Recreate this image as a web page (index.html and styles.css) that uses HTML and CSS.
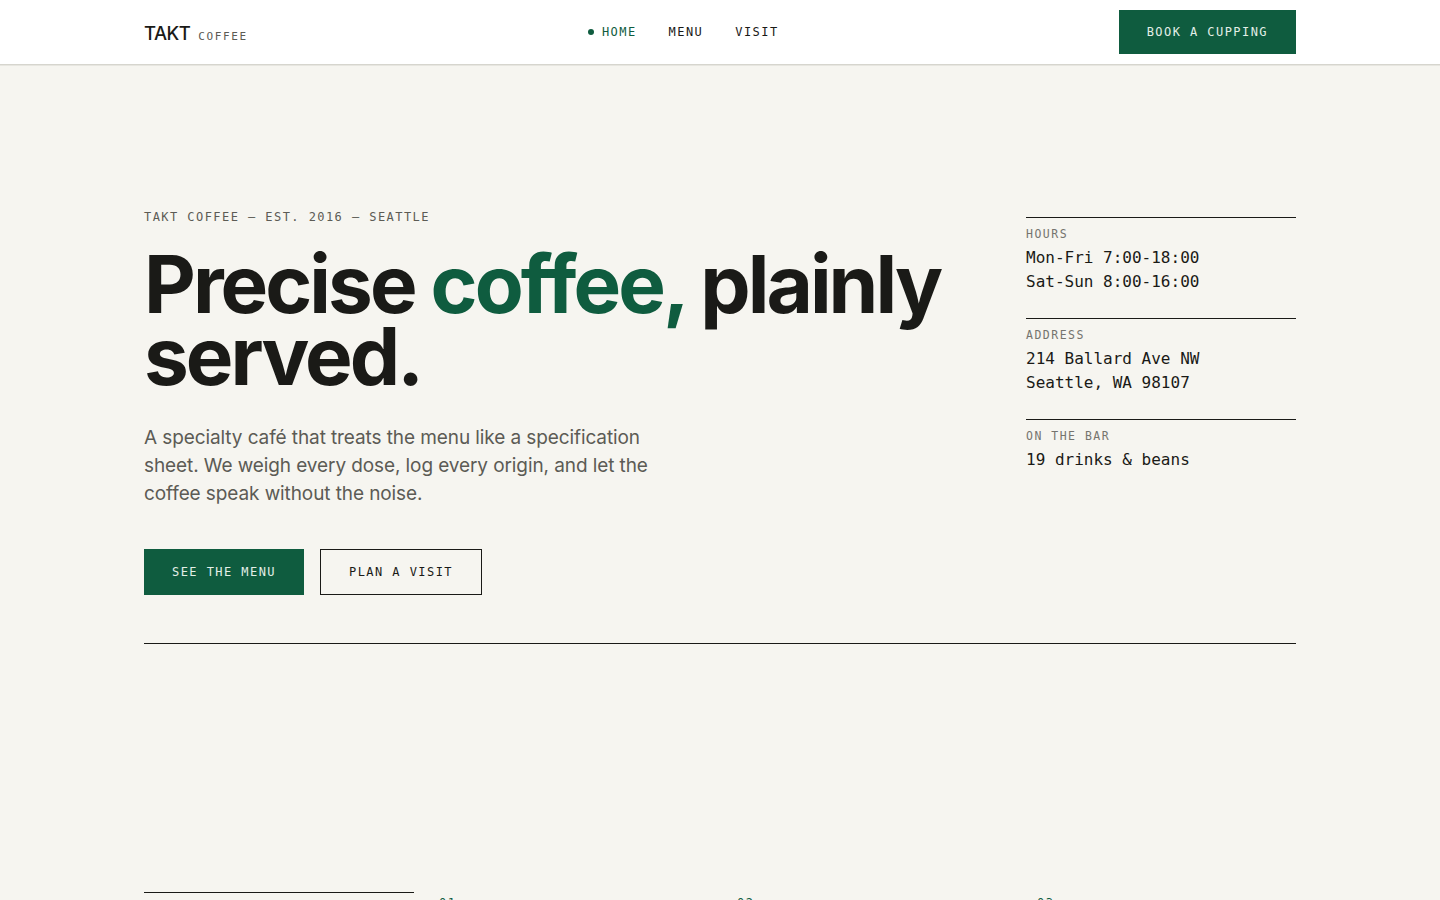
FILE: index.html
```html
<!DOCTYPE html>
<html lang="en">
<head>
<meta charset="utf-8">
<title>Takt Coffee</title>
<link rel="stylesheet" href="styles.css">
</head>
<body>
<header class="site-header">
  <div class="container header-inner">
    <a class="logo" href="#">
      <span class="logo-mark">TAKT</span>
      <span class="logo-sub">COFFEE</span>
    </a>
    <nav class="nav">
      <a class="nav-link is-active" href="#"><span class="nav-dot"></span>HOME</a>
      <a class="nav-link" href="#">MENU</a>
      <a class="nav-link" href="#">VISIT</a>
    </nav>
    <a class="btn btn-primary btn-header" href="#">BOOK A CUPPING</a>
  </div>
</header>

<main>
  <section class="hero container">
    <div class="hero-main">
      <p class="eyebrow">TAKT COFFEE — EST. 2016 — SEATTLE</p>
      <h1 class="hero-title">Precise <span class="accent">coffee,</span> plainly served.</h1>
      <p class="hero-lede">A specialty café that treats the menu like a specification sheet. We weigh every dose, log every origin, and let the coffee speak without the noise.</p>
      <div class="hero-actions">
        <a class="btn btn-primary" href="#">SEE THE MENU</a>
        <a class="btn btn-outline" href="#">PLAN A VISIT</a>
      </div>
    </div>
    <aside class="facts">
      <div class="fact">
        <p class="fact-label">HOURS</p>
        <p class="fact-value">Mon-Fri 7:00-18:00<br>Sat-Sun 8:00-16:00</p>
      </div>
      <div class="fact">
        <p class="fact-label">ADDRESS</p>
        <p class="fact-value">214 Ballard Ave NW<br>Seattle, WA 98107</p>
      </div>
      <div class="fact">
        <p class="fact-label">ON THE BAR</p>
        <p class="fact-value">19 drinks &amp; beans</p>
      </div>
    </aside>
  </section>

  <div class="container"><hr class="rule"></div>

  <section class="steps container">
    <div class="steps-intro">
      <h2 class="steps-title">How we work</h2>
    </div>
    <div class="step step-1">
      <p class="step-num">01</p>
      <h3 class="step-title">Weigh</h3>
    </div>
    <div class="step step-2">
      <p class="step-num">02</p>
      <h3 class="step-title">Log</h3>
    </div>
    <div class="step step-3">
      <p class="step-num">03</p>
      <h3 class="step-title">Serve</h3>
    </div>
  </section>
</main>
</body>
</html>
```

FILE: styles.css
```css
* { box-sizing: border-box; }

html, body {
  margin: 0;
  padding: 0;
}

body {
  background: #f6f5f0;
  color: #1a1a17;
  font-family: Inter, "Noto Sans", sans-serif;
}

p, h1, h2, h3 { margin: 0; }

a { text-decoration: none; color: inherit; }

.container {
  width: 1152px;
  margin: 0 auto;
}

/* Header */
.site-header {
  background: #ffffff;
  border-bottom: 1px solid #d6d5ce;
  box-shadow: 0 1px 0 #e7e6e0;
}

.header-inner {
  height: 64px;
  display: flex;
  align-items: center;
  justify-content: space-between;
}

.logo {
  display: flex;
  align-items: baseline;
  gap: 8px;
  padding-top: 2px;
}

.logo-mark {
  font-family: Inter, sans-serif;
  font-weight: 500;
  font-size: 18.5px;
  letter-spacing: -0.03em;
  color: #1a1a17;
}

.logo-sub {
  font-family: "DejaVu Sans Mono", monospace;
  font-size: 11px;
  letter-spacing: 0.15em;
  color: #5c5b55;
}

.nav {
  display: flex;
  align-items: center;
  gap: 32px;
}

.nav-link {
  display: flex;
  align-items: center;
  font-family: "DejaVu Sans Mono", monospace;
  font-size: 12px;
  letter-spacing: 0.12em;
  color: #1a1a17;
}

.nav-link.is-active { color: #0f5c3f; }

.nav-dot {
  width: 6px;
  height: 6px;
  border-radius: 50%;
  background: #0f5c3f;
  margin-right: 8px;
}

/* Buttons */
.btn {
  display: inline-flex;
  align-items: center;
  justify-content: center;
  font-family: "DejaVu Sans Mono", monospace;
  font-size: 12px;
  letter-spacing: 0.12em;
  padding: 0 28px;
  height: 46px;
}

.btn-primary {
  background: #0f5c3f;
  color: #e3efe7;
}

.btn-outline {
  border: 1px solid #1a1a17;
  color: #1a1a17;
}

.btn-header { height: 44px; }

/* Hero */
.hero {
  display: grid;
  grid-template-columns: 1fr 270px;
  gap: 48px;
  padding-top: 144px;
  padding-bottom: 48px;
}

.eyebrow {
  font-family: "DejaVu Sans Mono", monospace;
  font-size: 12px;
  line-height: 16px;
  letter-spacing: 0.12em;
  color: #5c5b55;
}

.hero-title {
  margin-top: 23px;
  font-family: Inter, sans-serif;
  font-weight: 700;
  font-size: 80px;
  line-height: 72px;
  letter-spacing: -0.037em;
  color: #1a1a17;
}

.accent { color: #0f5c3f; }

.hero-lede {
  margin-top: 32px;
  max-width: 520px;
  font-size: 19px;
  line-height: 28px;
  letter-spacing: -0.005em;
  color: #5c5b55;
}

.hero-actions {
  margin-top: 41px;
  display: flex;
  gap: 16px;
}

/* Facts */
.facts {
  margin-top: 8px;
}

.fact {
  border-top: 1px solid #1a1a17;
  padding: 8px 0 24px;
}

.fact-label {
  font-family: "DejaVu Sans Mono", monospace;
  font-size: 11.5px;
  line-height: 16px;
  letter-spacing: 0.13em;
  color: #75746e;
}

.fact-value {
  margin-top: 4px;
  font-family: "DejaVu Sans Mono", monospace;
  font-size: 16px;
  line-height: 24px;
  color: #1a1a17;
}

.rule {
  margin: 0;
  border: 0;
  border-top: 1px solid #1a1a17;
}

/* Steps */
.steps {
  display: grid;
  grid-template-columns: 270px 298px 300px 1fr;
  padding-top: 248px;
  padding-bottom: 96px;
}

.steps-intro {
  border-top: 1px solid #1a1a17;
  padding-top: 16px;
}

.steps-title {
  font-size: 28px;
  font-weight: 700;
  letter-spacing: -0.02em;
}

.step {
  padding-left: 25px;
  padding-top: 3px;
}

.step-num {
  font-family: "DejaVu Sans Mono", monospace;
  font-size: 12px;
  line-height: 16px;
  letter-spacing: 0.12em;
  color: #0f5c3f;
}

.step-title {
  margin-top: 12px;
  font-size: 22px;
  font-weight: 600;
}
```
